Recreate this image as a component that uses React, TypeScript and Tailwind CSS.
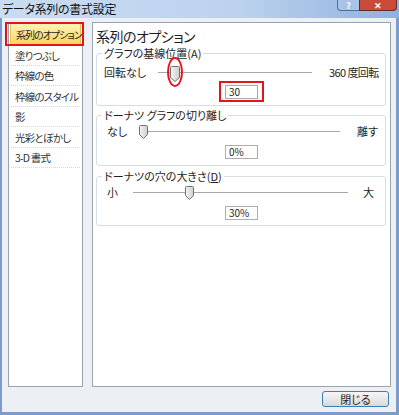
import React from "react";

function Thumb({ big = false }: { big?: boolean }) {
  const w = big ? 10 : 9;
  const h = big ? 16 : 14;
  return (
    <svg width={w} height={h} viewBox={`0 0 ${w} ${h}`} className="block">
      <defs>
        <linearGradient id={big ? "tg1" : "tg2"} x1="0" y1="0" x2="1" y2="0">
          <stop offset="0" stopColor="#f4f4f4" />
          <stop offset="1" stopColor="#cfcfcf" />
        </linearGradient>
      </defs>
      <path
        d={`M1.5 0.5 H${w - 1.5} Q${w - 0.5} 0.5 ${w - 0.5} 1.5 V${h - 4.5} L${w / 2} ${h - 0.5} L0.5 ${h - 4.5} V1.5 Q0.5 0.5 1.5 0.5 Z`}
        fill={`url(#${big ? "tg1" : "tg2"})`}
        stroke="#707070"
        strokeWidth="1"
      />
    </svg>
  );
}

function Track({ width, thumbLeft, big = false }: { width: number; thumbLeft: number; big?: boolean }) {
  return (
    <div className="relative h-[16px] shrink-0" style={{ width }}>
      <div className="absolute left-0 right-0 top-[8px] h-[1px] bg-[#a8a8a8]" />
      <div className="absolute left-0 right-0 top-[9px] h-[1px] bg-[#ffffff]" />
      <div className="absolute top-[2px]" style={{ left: thumbLeft }}>
        <Thumb big={big} />
      </div>
    </div>
  );
}

function Group({
  label,
  height,
  className,
  children,
}: {
  label: React.ReactNode;
  height: number;
  className?: string;
  children: React.ReactNode;
}) {
  return (
    <div
      className={`relative w-[290px] shrink-0 rounded-[3px] border border-[#d5dde5] ${className ?? ""}`}
      style={{ height }}
    >
      <div className="absolute left-[5px] top-[-8px] whitespace-nowrap bg-white px-[2px] text-[11px] leading-[15px] text-[#1e1e1e]">
        {label}
      </div>
      {children}
    </div>
  );
}

function InputBox({ value, className }: { value: string; className?: string }) {
  return (
    <div className={`flex justify-center ${className ?? ""}`}>
      <div className="ml-[1px] flex h-[14px] w-[33px] items-center border border-[#abadb3] bg-white pl-[3px] text-[10px] leading-[12px] text-[#1e1e1e]">
        {value}
      </div>
    </div>
  );
}

const items = ["塗りつぶし", "枠線の色", "枠線のスタイル", "影", "光彩とぼかし", "3-D 書式"];

export default function App() {
  return (
    <div className="relative h-[415px] w-[399px] overflow-hidden bg-[#7c9ccb] font-['Noto_Sans_CJK_JP',sans-serif] [font-feature-settings:'palt']">
      {/* title bar */}
      <div className="flex h-[18px] items-start bg-[linear-gradient(90deg,#c9dcf2_0%,#bcd2ee_60%,#8fb1de_100%)]">
        <div className="whitespace-nowrap pl-[2px] pt-[1px] text-[12px] leading-[15px] tracking-[-0.3px] text-[#111]">
          データ系列の書式設定
        </div>
        <div className="ml-auto flex h-[11px] shrink-0">
          <div className="flex h-[11px] w-[22px] items-center justify-center rounded-bl-[4px] border-b border-l border-[#4f6f9d] bg-[#a9c3e6] text-[9px] font-bold leading-[9px] text-white">
            ?
          </div>
          <div className="flex h-[11px] w-[38px] items-center justify-center rounded-br-[4px] border-b border-l border-r border-[#6b2a22] bg-[#c94a38] text-[9px] font-bold leading-[9px] text-white">
            ✕
          </div>
        </div>
        <div className="w-[2px] shrink-0" />
      </div>

      {/* body */}
      <div className="ml-[2px] mr-[3px] flex h-[394px] flex-col bg-[#eceff3] pl-[6px] pr-[5px] pt-[4px]">
        <div className="flex h-[365px]">
          {/* left list */}
          <div className="flex h-[365px] w-[75px] shrink-0 flex-col border border-[#9ba3ad] bg-white">
            <div className="mx-[1px] flex h-[22px] items-center whitespace-nowrap rounded-[2px] border border-[#e6c35a] bg-[linear-gradient(180deg,#fff3b8,#fcd45f)] pl-[5px] text-[10px] tracking-[-1px] text-[#222]">
              系列のオプション
            </div>
            {items.map((t) => (
              <div
                key={t}
                className="mx-[2px] flex h-[20.5px] items-center whitespace-nowrap border-b border-dotted border-[#d6d6d6] pl-[4px] pt-[2px] text-[10.5px] tracking-[-0.8px] text-[#333]"
              >
                {t}
              </div>
            ))}
          </div>

          {/* right panel */}
          <div className="ml-[9px] flex h-[365px] w-[299px] shrink-0 flex-col border border-[#9ba3ad] bg-white pl-[3px] pt-[3px]">
            <div className="h-[20px] whitespace-nowrap text-[14px] leading-[20px] tracking-[-0.5px] text-[#1e1e1e]">
              系列のオプション
            </div>

            <Group label="グラフの基線位置(A)" height={53} className="mt-[7px]">
              <div className="flex items-center pl-[7px] pt-[10px] text-[11px] leading-[16px] text-[#1e1e1e]">
                <div className="w-[54px] shrink-0 whitespace-nowrap">回転なし</div>
                <Track width={154} thumbLeft={12} big />
                <div className="ml-[17px] shrink-0 whitespace-nowrap tracking-[-0.6px]">360 度回転</div>
              </div>
              <InputBox value="30" className="mt-[5px]" />
            </Group>

            <Group label="ドーナツ グラフの切り離し" height={51} className="mt-[9px]">
              <div className="flex items-center pl-[10px] pt-[7px] text-[11px] leading-[16px] text-[#1e1e1e]">
                <div className="w-[33px] shrink-0">なし</div>
                <Track width={200} thumbLeft={-1} />
                <div className="ml-[17px] shrink-0 whitespace-nowrap">離す</div>
              </div>
              <InputBox value="0%" className="mt-[6px]" />
            </Group>

            <Group
              label={
                <span>
                  ドーナツの穴の大きさ(<span className="underline">D</span>)
                </span>
              }
              height={50}
              className="mt-[10px]"
            >
              <div className="flex items-center pl-[10px] pt-[7px] text-[11px] leading-[16px] text-[#1e1e1e]">
                <div className="w-[26px] shrink-0">小</div>
                <Track width={215} thumbLeft={52} />
                <div className="ml-[15px] shrink-0">大</div>
              </div>
              <InputBox value="30%" className="mt-[6px]" />
            </Group>
          </div>
        </div>

        {/* bottom button */}
        <div className="mt-[4px] flex justify-end pr-[2px]">
          <div className="flex h-[16px] w-[67px] items-center justify-center rounded-[3px] border border-[#3c7fb1] bg-[linear-gradient(180deg,#f6f6f6,#d9d9d9)] text-[11px] leading-[14px] text-[#1e1e1e]">
            閉じる
          </div>
        </div>
      </div>

      {/* red annotation marks */}
      <div className="pointer-events-none absolute left-[5px] top-[22px] h-[24px] w-[79px] border-2 border-[#e5141c]" />
      <div className="pointer-events-none absolute left-[167px] top-[57px] h-[30px] w-[16px] rounded-[50%] border-2 border-[#e5141c]" />
      <div className="pointer-events-none absolute left-[219px] top-[81px] h-[21px] w-[45px] border-2 border-[#e5141c]" />
    </div>
  );
}
